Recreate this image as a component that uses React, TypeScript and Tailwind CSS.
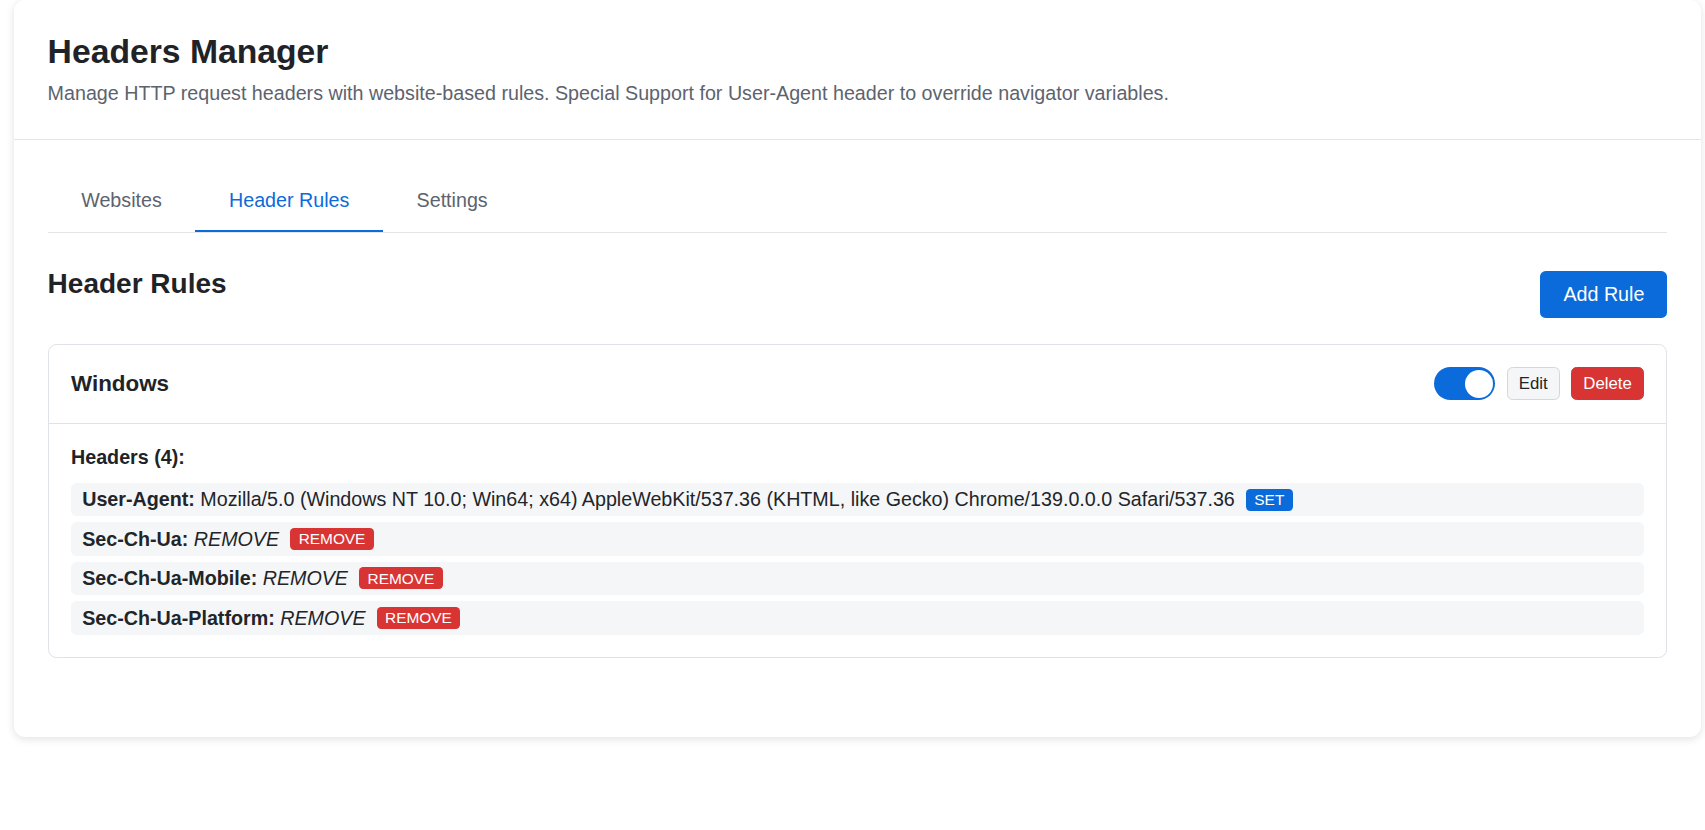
const headers = [
  {
    name: "User-Agent",
    value: "Mozilla/5.0 (Windows NT 10.0; Win64; x64) AppleWebKit/537.36 (KHTML, like Gecko) Chrome/139.0.0.0 Safari/537.36",
    action: "set",
  },
  { name: "Sec-Ch-Ua", value: "REMOVE", action: "remove" },
  { name: "Sec-Ch-Ua-Mobile", value: "REMOVE", action: "remove" },
  { name: "Sec-Ch-Ua-Platform", value: "REMOVE", action: "remove" },
];

const tabs = ["Websites", "Header Rules", "Settings"];

export default function App() {
  return (
    <div className="min-h-screen bg-white font-['Liberation_Sans',Arial,sans-serif] text-[#212529]">
      <div className="ml-[14px] w-[1687px] rounded-[11.2px] bg-white shadow-[0_2px_8px_rgba(0,0,0,0.12)]">
        <header className="border-b border-[#e3e5e9] px-[33.6px] pt-[32px] pb-[34.8px]">
          <h1 className="mb-[11.2px] text-[33.7px] font-bold leading-[1.15] text-[#1f2328]">
            Headers Manager
          </h1>
          <p className="text-[19.7px] leading-[1.15] text-[#5c636e]">
            Manage HTTP request headers with website-based rules. Special Support for User-Agent header to override navigator variables.
          </p>
        </header>

        <div className="px-[33.6px] pt-[33.6px] pb-[79px]">
          <div className="mb-[33.6px] flex border-b border-[#e3e5e9]">
            {tabs.map((t) => (
              <button
                key={t}
                className={
                  t === "Header Rules"
                    ? "border-b-2 border-[#0b6bdb] px-[33.6px] pt-[15px] pb-[18.6px] text-[19.7px] leading-[1.15] text-[#0b6bdb]"
                    : "border-b-2 border-transparent px-[33.6px] pt-[15px] pb-[18.6px] text-[19.7px] leading-[1.15] text-[#5c636e]"
                }
              >
                {t}
              </button>
            ))}
          </div>

          <div className="mb-[21px] flex items-center justify-between">
            <h2 className="mb-[22.4px] text-[28px] font-bold leading-[1.2] text-[#1f2328]">Header Rules</h2>
            <button className="h-[47px] rounded-[5.6px] bg-[#0b6bdb] px-[23px] text-[19.7px] text-white">
              Add Rule
            </button>
          </div>

          <div className="rounded-[8.4px] border border-[#dfe2e6]">
            <div className="flex items-center justify-between border-b border-[#dfe2e6] p-[22.4px]">
              <h3 className="text-[22.4px] font-bold leading-[1.15] text-[#1f2328]">Windows</h3>
              <div className="flex items-center gap-[11.2px]">
                <span className="flex h-[33px] w-[61.6px] items-center justify-end rounded-full bg-[#0b6bdb] p-[2.8px]">
                  <span className="size-[28px] rounded-full bg-white" />
                </span>
                <button className="rounded-[5.6px] border border-[#d3d7dd] bg-[#f5f6f8] px-[11.2px] py-[5.6px] text-[16.8px] leading-[1.15] text-[#212529]">
                  Edit
                </button>
                <button className="rounded-[5.6px] border border-[#d93434] bg-[#d93434] px-[11.2px] py-[5.6px] text-[16.8px] leading-[1.15] text-white">
                  Delete
                </button>
              </div>
            </div>

            <div className="p-[22.4px]">
              <div className="mb-[14px] text-[19.7px] font-bold leading-[1.15] text-[#1f2328]">
                Headers ({headers.length}):
              </div>
              <div className="flex flex-col gap-[5.6px]">
                {headers.map((h) => (
                  <div
                    key={h.name}
                    className="flex items-center rounded-[5.6px] bg-[#f5f6f8] px-[11.2px] py-[5.6px] text-[19.7px] leading-[1.15]"
                  >
                    <span>
                      <strong className="font-bold">{h.name}:</strong>{" "}
                      {h.action === "remove" ? <em>{h.value}</em> : h.value}
                    </span>
                    <span
                      className={
                        h.action === "set"
                          ? "ml-[11.2px] rounded-[4.2px] bg-[#0b6bdb] px-[8.4px] py-[2.2px] text-[15.4px] leading-[1.15] text-white"
                          : "ml-[11.2px] rounded-[4.2px] bg-[#d93434] px-[8.4px] py-[2.2px] text-[15.4px] leading-[1.15] text-white"
                      }
                    >
                      {h.action.toUpperCase()}
                    </span>
                  </div>
                ))}
              </div>
            </div>
          </div>
        </div>
      </div>
    </div>
  );
}
